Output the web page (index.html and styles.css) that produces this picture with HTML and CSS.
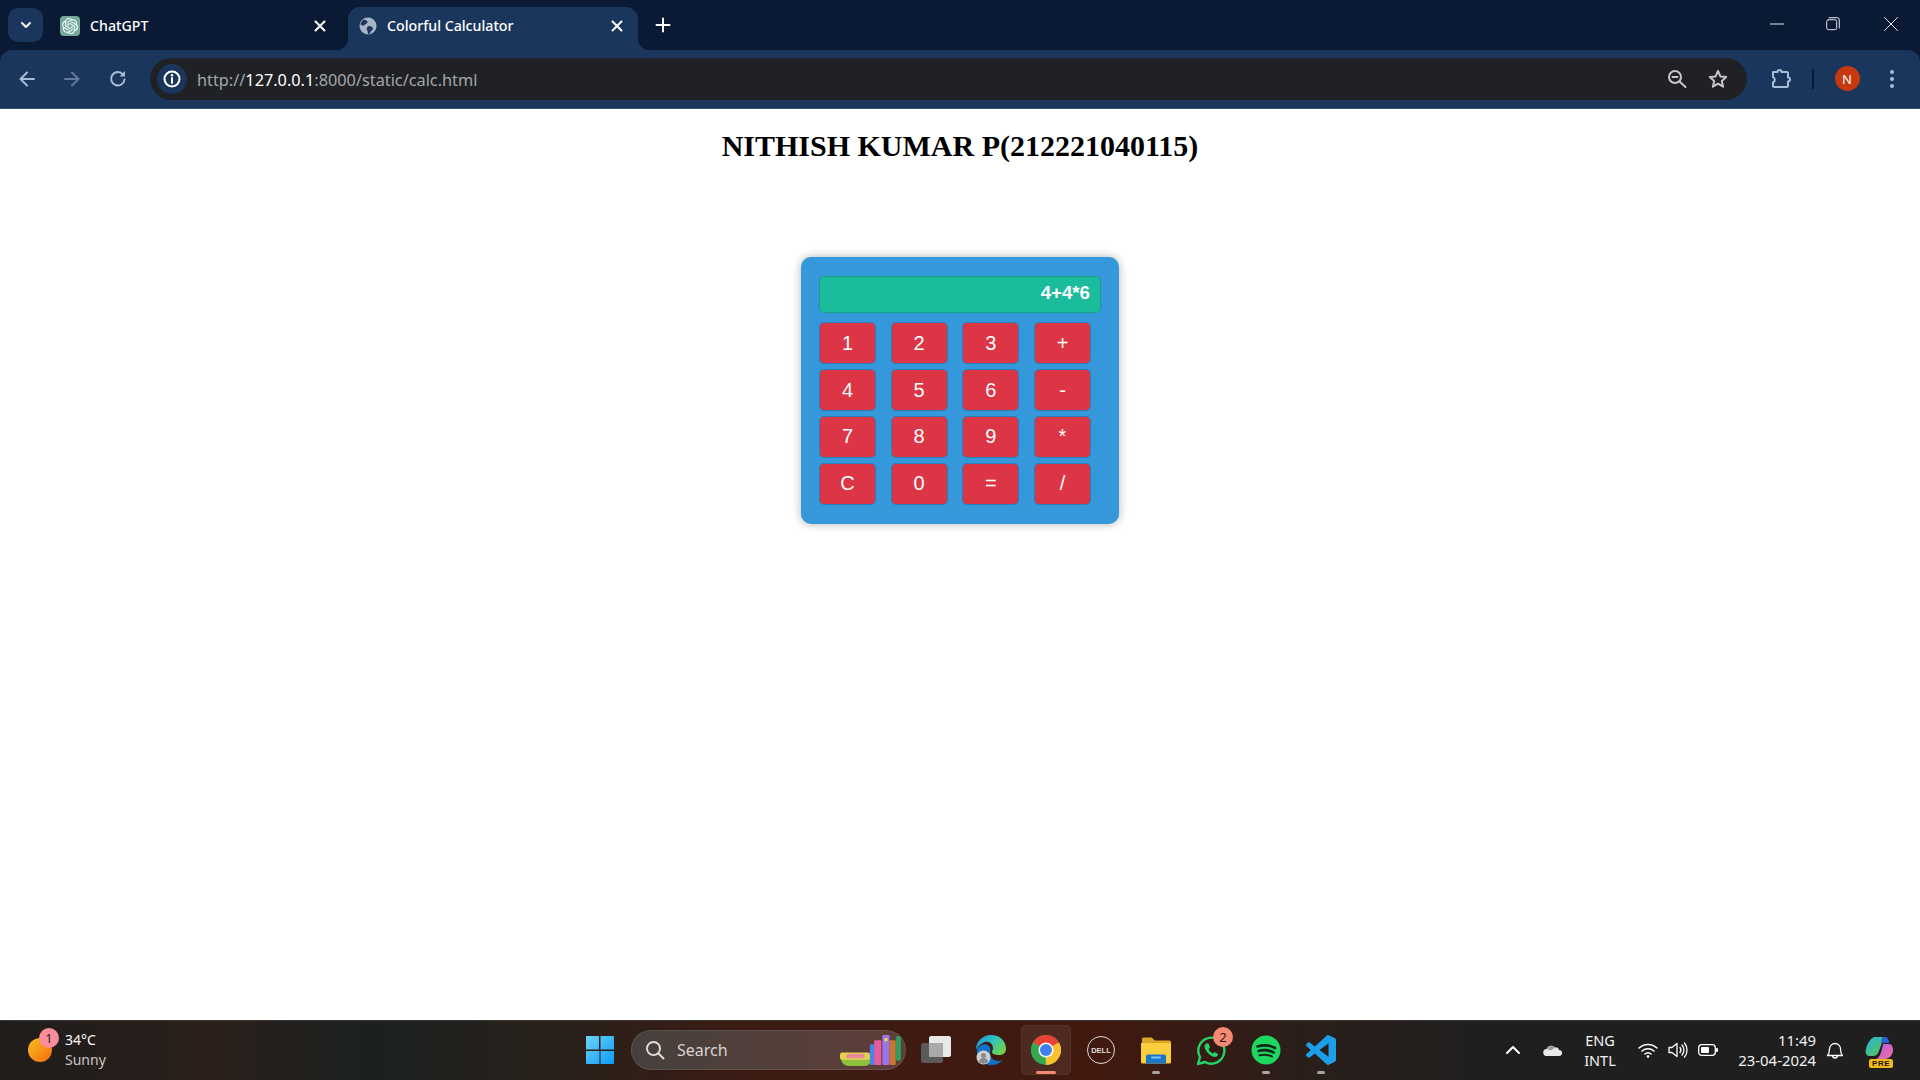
FILE: index.html
```html
<!DOCTYPE html>
<html lang="en">
<head>
<meta charset="utf-8">
<title>Colorful Calculator</title>
<link rel="stylesheet" href="styles.css">
</head>
<body>
<header class="browser">
  <div class="tabstrip">
    <button class="tabsearch"><svg class="i14" viewBox="0 0 14 14"><path d="M3 5l4 4 4-4" class="st2 white"/></svg></button>
    <div class="tab">
      <span class="favicon-gpt"><svg viewBox="0 0 24 24"><path fill="#fff" d="M22.2819 9.8211a5.9847 5.9847 0 0 0-.5157-4.9108 6.0462 6.0462 0 0 0-6.5098-2.9A6.0651 6.0651 0 0 0 4.9807 4.1818a5.9847 5.9847 0 0 0-3.9977 2.9 6.0462 6.0462 0 0 0 .7427 7.0966 5.98 5.98 0 0 0 .511 4.9107 6.051 6.051 0 0 0 6.5146 2.9001A5.9847 5.9847 0 0 0 13.2599 24a6.0557 6.0557 0 0 0 5.7718-4.2058 5.9894 5.9894 0 0 0 3.9977-2.9001 6.0557 6.0557 0 0 0-.7475-7.0729zm-9.022 12.6081a4.4755 4.4755 0 0 1-2.8764-1.0408l.1419-.0804 4.7783-2.7582a.7948.7948 0 0 0 .3927-.6813v-6.7369l2.02 1.1686a.071.071 0 0 1 .038.052v5.5826a4.504 4.504 0 0 1-4.4945 4.4944zm-9.6607-4.1254a4.4708 4.4708 0 0 1-.5346-3.0137l.142.0852 4.783 2.7582a.7712.7712 0 0 0 .7806 0l5.8428-3.3685v2.3324a.0804.0804 0 0 1-.0332.0615L9.74 19.9502a4.4992 4.4992 0 0 1-6.1408-1.6464zM2.3408 7.8956a4.485 4.485 0 0 1 2.3655-1.9728V11.6a.7664.7664 0 0 0 .3879.6765l5.8144 3.3543-2.0201 1.1685a.0757.0757 0 0 1-.071 0l-4.8303-2.7865A4.504 4.504 0 0 1 2.3408 7.872zm16.5963 3.8558L13.1038 8.364 15.1192 7.2a.0757.0757 0 0 1 .071 0l4.8303 2.7913a4.4944 4.4944 0 0 1-.6765 8.1042v-5.6772a.79.79 0 0 0-.407-.667zm2.0107-3.0231l-.142-.0852-4.7735-2.7818a.7759.7759 0 0 0-.7854 0L9.409 9.2297V6.8974a.0662.0662 0 0 1 .0284-.0615l4.8303-2.7866a4.4992 4.4992 0 0 1 6.6802 4.66zM8.3065 12.863l-2.02-1.1638a.0804.0804 0 0 1-.038-.0567V6.0742a4.4992 4.4992 0 0 1 7.3757-3.4537l-.142.0805L8.704 5.459a.7948.7948 0 0 0-.3927.6813zm1.0976-2.3654l2.602-1.4998 2.6069 1.4998v2.9994l-2.5974 1.4997-2.6067-1.4997Z"/></svg></span>
      <span class="tabtitle">ChatGPT</span>
      <svg class="tabclose" viewBox="0 0 16 16"><path d="M3.5 3.5l9 9M12.5 3.5l-9 9" class="st2 white"/></svg>
    </div>
    <div class="tab active">
      <svg class="favicon-globe" viewBox="0 0 18 18"><circle cx="9" cy="9" r="8.5" fill="#a9b5c6"/><path d="M5 2.5c2 .5 3.5 1 3.5 2.5S6.5 7 5.5 8 3 8.5 1.5 7.5C2 5.500 3 3.500 5 2.500zM10 9c2 0 4 1 4 2.500s-2 2-2.500 3.500-1.500 2-2.500 2c0-2-.5-3-1-4S8 9 10 9z" fill="#1b365d"/></svg>
      <span class="tabtitle">Colorful Calculator</span>
      <svg class="tabclose" viewBox="0 0 16 16"><path d="M3.5 3.5l9 9M12.5 3.5l-9 9" class="st2 white"/></svg>
    </div>
    <svg class="newtab" viewBox="0 0 16 16"><path d="M8 1.500v13M1.500 8h13" class="st2 white"/></svg>
    <div class="winctl">
      <span class="wbtn"><svg class="i14" viewBox="0 0 14 14"><path d="M.5 7h13" class="st1 light"/></svg></span>
      <span class="wbtn"><svg class="i14" viewBox="0 0 14 14"><rect x=".7" y="2.700" width="10" height="10" rx="2" class="st1 light"/><path d="M3 .7h8a2.300 2.300 0 0 1 2.300 2.300v8" class="st1 light"/></svg></span>
      <span class="wbtn wide"><svg class="i14" viewBox="0 0 14 14"><path d="M.5.5l13 13M13.500.5l-13 13" class="st1 light"/></svg></span>
    </div>
  </div>
  <div class="toolbar">
    <span class="tbtn"><svg class="i18" viewBox="0 0 18 18"><path d="M16 9H2.500M9 2.500L2.500 9 9 15.500" class="st2 ico"/></svg></span>
    <span class="tbtn forward"><svg class="i18" viewBox="0 0 18 18"><path d="M2 9h13.500M9 2.500L15.500 9 9 15.500" class="st2 dim"/></svg></span>
    <span class="tbtn reload"><svg class="i18" viewBox="0 0 18 18"><path d="M15.500 9.500A6.700 6.700 0 1 1 14 4.500" class="st2 ico"/><path d="M16 1v5.500h-5.500z" class="fill-ico"/></svg></span>
    <div class="omnibox">
      <span class="siteinfo"><svg class="i18" viewBox="0 0 18 18"><circle cx="9" cy="9" r="7.500" class="st2 white"/><path d="M9 8v5" class="st2 white"/><circle cx="9" cy="5.300" r="1.200" fill="#fff"/></svg></span>
      <span class="url">http://<b class="host">127.0.0.1</b>:8000/static/calc.html</span>
      <span class="obtn"><svg class="i20" viewBox="0 0 20 20"><circle cx="8" cy="8" r="6" class="st2 grey"/><path d="M5.500 8h5M12.500 12.500l6 5.500" class="st2 grey"/></svg></span>
      <span class="obtn star"><svg class="i20" viewBox="0 0 20 20"><path d="M10 2l2.400 5.400 5.800.6-4.400 3.900 1.300 5.800L10 14.700l-5.100 3 1.300-5.800L1.800 8l5.800-.6z" class="st2 grey"/></svg></span>
    </div>
    <div class="tools">
      <span class="tbtn ext"><svg class="i22" viewBox="0 0 22 22"><path d="M3 4h4.500a2 2 0 0 1 4 0H17a1 1 0 0 1 1 1v4.500a2 2 0 0 1 0 4V18a1 1 0 0 1-1 1H4a1 1 0 0 1-1-1v-3.500a3 3 0 0 0 0-5.500z" class="st2 ico"/></svg></span>
      <span class="tooldiv"></span>
      <span class="tbtn avatarwrap"><span class="avatar">N</span></span>
      <span class="tbtn dots"><i></i><i></i><i></i></span>
    </div>
  </div>
</header>

<main class="page">
  <h1 class="title">NITHISH KUMAR P(212221040115)</h1>
  <section class="calculator">
    <div class="display">4+4*6</div>
    <div class="keys">
      <button class="key">1</button><button class="key">2</button><button class="key">3</button><button class="key">+</button>
      <button class="key">4</button><button class="key">5</button><button class="key">6</button><button class="key">-</button>
      <button class="key">7</button><button class="key">8</button><button class="key">9</button><button class="key">*</button>
      <button class="key">C</button><button class="key">0</button><button class="key">=</button><button class="key">/</button>
    </div>
  </section>
</main>

<footer class="taskbar">
  <div class="weather">
    <span class="sun"><span class="sunbadge">1</span></span>
    <span class="wtext"><span class="temp">34°C</span><span class="cond">Sunny</span></span>
  </div>
  <div class="apps">
    <span class="app"><svg class="i30" viewBox="0 0 30 30"><defs><linearGradient id="w" x1="0" y1="0" x2="1" y2="1"><stop offset="0" stop-color="#6fd3fb"/><stop offset="1" stop-color="#0a9bf5"/></linearGradient></defs><path fill="url(#w)" d="M1 2a1 1 0 0 1 1-1h12v13.500H1zM15.500 1H28a1 1 0 0 1 1 1v12.500H15.500zM1 16h13.500v13H2a1 1 0 0 1-1-1zM15.500 16H29v12a1 1 0 0 1-1 1H15.500z"/></svg></span>
    <div class="searchbox">
      <svg class="i20" viewBox="0 0 20 20"><circle cx="8.500" cy="8.500" r="6.500" class="st2 pale"/><path d="M13.500 13.500l5 5" class="st2 pale"/></svg>
      <span class="searchlabel">Search</span>
      <svg class="books" viewBox="0 0 60 30"><path d="M1 22h29v2a6 6 0 0 1-6 6H8a8 8 0 0 1-7-6z" fill="#8fc13e"/><rect x="0" y="17" width="29" height="7" rx="2" fill="#e3d04f"/><rect x="6" y="18.500" width="18" height="4" rx="2" fill="#e78b98"/><rect x="29" y="9" width="4" height="20" rx="1" fill="#3f87e8"/><rect x="33" y="5" width="7" height="24" rx="1" fill="#e45da0"/><rect x="41" y="0" width="7" height="29" rx="1" fill="#9d75e8"/><rect x="43" y="3" width="3" height="3" fill="#f2d24b"/><rect x="48" y="5" width="6" height="24" rx="1" fill="#c9762f"/><rect x="54" y="1" width="5" height="24" rx="2" fill="#2f9e62"/></svg>
    </div>
    <span class="app"><svg class="i30" viewBox="0 0 30 30"><rect x="8" y="1" width="22" height="21" rx="2" fill="#e8e8e8"/><rect x="0" y="8" width="22" height="20" rx="2" fill="#5a5a5a"/><rect x="8" y="8" width="14" height="14" fill="#a9a9a9"/></svg></span>
    <span class="app"><svg class="i30" viewBox="0 0 30 30"><defs><linearGradient id="e1" x1="0" y1="0" x2="1" y2=".6"><stop offset="0" stop-color="#1f8fd8"/><stop offset=".55" stop-color="#2ec4c0"/><stop offset="1" stop-color="#6fd24a"/></linearGradient></defs><path fill="url(#e1)" d="M15 0c9 0 15 6 15 14 0 4-3 6-7 6s-7-1-7-3c0-1 1-2 1-4 0-4-4-7-8-6S1 12 0 15C0 7 6 0 15 0z"/><path fill="#1272c9" d="M1 14c3-5 9-6 12-3s0 7 2 11 8 5 12 3c-3 3-7 5-12 5C7 30 0 23 1 14z"/><circle cx="7.500" cy="22.500" r="7" fill="#cfcfcf"/><circle cx="7.500" cy="20.500" r="2.500" fill="#8a8a8a"/><path d="M3 27c0-3 2-4 4.500-4s4.500 1 4.500 4a7 7 0 0 1-9 0z" fill="#8a8a8a"/></svg></span>
    <span class="app current"><svg class="i30" viewBox="0 0 30 30"><circle cx="15" cy="15" r="15" fill="#34a853"/><path d="M15 0a15 15 0 0 1 13 7.500L15 15 2 7.500A15 15 0 0 1 15 0z" fill="#ea4335"/><path d="M28 7.500A15 15 0 0 1 15 30l-1-15z" fill="#fbc02d"/><path d="M2 7.500L15 15l-6.500 13.500A15 15 0 0 1 2 7.500z" fill="#34a853"/><circle cx="15" cy="15" r="7.500" fill="#fff"/><circle cx="15" cy="15" r="6" fill="#3f7ff0"/></svg></span>
    <span class="app"><span class="dell">DELL</span></span>
    <span class="app running"><svg class="i30" viewBox="0 0 30 30"><path d="M1 4a1.500 1.500 0 0 1 1.500-1.500h8L14 5.500h14.500A1.500 1.500 0 0 1 30 7v2H1z" fill="#e0a526"/><path d="M0 8h30v19a1.500 1.500 0 0 1-1.500 1.500h-27A1.500 1.500 0 0 1 0 27z" fill="#fbcd3f"/><path d="M5 21a1.500 1.500 0 0 1 1.500-1.500h17A1.500 1.500 0 0 1 25 21v7.500H5z" fill="#1a78c8"/><path d="M11 22.500h8" class="st2 sky"/></svg></span>
    <span class="app"><svg class="i30" viewBox="0 0 30 30"><path d="M2 29l2-7A13 13 0 1 1 9 27z" class="wa"/><path d="M10 8.500c-2 1.500-2 4 0 7s5 6 8.500 6.500c2 0 3.500-1 3.500-3l-3.500-2-1.500 1.500c-2-1-3.500-2.500-4.500-4.500l1.500-1.500-1.500-4z" fill="#25d366"/></svg><span class="appbadge">2</span></span>
    <span class="app running"><svg class="i30" viewBox="0 0 30 30"><circle cx="15" cy="15" r="14.500" fill="#1ed760"/><path d="M6.500 11.500c6-1.800 12.500-1.300 17.500 1.500M7.500 16c5-1.400 10.500-1 15 1.500" class="spot"/><path d="M8.500 20.300c4.500-1.100 9-.8 12.500 1.200" class="spot thin"/></svg></span>
    <span class="app running"><svg class="i30" viewBox="0 0 24 24"><path fill="#1c9ee8" d="M23.15 2.587L18.21.21a1.494 1.494 0 0 0-1.705.29l-9.46 8.63-4.12-3.128a.999.999 0 0 0-1.276.057L.327 7.261A1 1 0 0 0 .326 8.74L3.899 12 .326 15.26a1 1 0 0 0 .001 1.479L1.65 17.94a.999.999 0 0 0 1.276.057l4.12-3.128 9.46 8.63a1.492 1.492 0 0 0 1.704.29l4.942-2.377A1.5 1.5 0 0 0 24 20.06V3.939a1.5 1.5 0 0 0-.85-1.352zm-5.146 14.861L10.826 12l7.178-5.448v10.896z"/></svg></span>
  </div>
  <div class="tray">
    <span class="tcell"><svg class="i16" viewBox="0 0 16 16"><path d="M2 11l6-6 6 6" class="st2 white"/></svg></span>
    <span class="tcell"><svg class="cloud" viewBox="0 0 20 12"><path d="M4 12a3.500 3.500 0 0 1-.5-7A5 5 0 0 1 12 3.500 3 3 0 0 1 16 6a3 3 0 0 1 0 6z" fill="#e8e8e8"/><path d="M4 5a5 5 0 0 1 8-1.500L8 6.500z" fill="#9a9a9a"/></svg></span>
    <span class="lang"><span>ENG</span><span>INTL</span></span>
    <span class="tcell net"><svg class="i20" viewBox="0 0 20 20"><path d="M1 8a13 13 0 0 1 18 0M4 11a9 9 0 0 1 12 0M7 14a4.500 4.500 0 0 1 6 0" class="st15 white"/><circle cx="10" cy="16.500" r="1.300" fill="#fff"/></svg></span>
    <span class="tcell"><svg class="i20" viewBox="0 0 20 20"><path d="M1 7.500v5h3l5 4v-13l-5 4z" class="st13 white"/><path d="M12 7.500a4 4 0 0 1 0 5M14 5a7.500 7.500 0 0 1 0 10M16.500 3a11 11 0 0 1 0 14" class="st13 white"/></svg></span>
    <span class="tcell"><svg class="i20" viewBox="0 0 20 20"><rect x="0.700" y="4.700" width="16.600" height="10.600" rx="3" class="st13 white"/><rect x="3" y="7" width="8" height="6" rx="1" fill="#fff"/><rect x="18" y="8" width="2" height="4" rx="1" fill="#fff"/></svg></span>
    <span class="clock"><span>11:49</span><span>23-04-2024</span></span>
    <span class="tcell bell"><svg class="i20" viewBox="0 0 20 20"><path d="M2.500 15.500c1.500-1.500 2-3 2-6.500a5.500 5.500 0 0 1 11 0c0 3.500.5 5 2 6.500zM7.500 15.500a2.500 2.500 0 0 0 5 0" class="st13 white"/></svg></span>
    <span class="tcell copilot">
      <svg class="i30" viewBox="0 0 30 30"><defs><linearGradient id="c1" x1="0" y1="0" x2="1" y2="1"><stop offset="0" stop-color="#1fb6e8"/><stop offset="1" stop-color="#66c33f"/></linearGradient><linearGradient id="c2" x1="0" y1="0" x2="1" y2="1"><stop offset="0" stop-color="#b45ce8"/><stop offset="1" stop-color="#f0709a"/></linearGradient></defs><path d="M10 2h9l-5 14c-1 3-3 5-6 5H4c-3 0-4-4-3-7C2 9 6 2 10 2z" fill="url(#c1)"/><path d="M17 2h3c3 0 4 3 4 6h-8z" fill="#2a5fd8"/><path d="M18 9h6c3 0 4 3 4 6 0 5-4 9-8 9h-9c4-2 5-5 7-15z" fill="url(#c2)"/></svg>
      <span class="pre">PRE</span>
    </span>
  </div>
</footer>
</body>
</html>
```

FILE: styles.css
```css
* { box-sizing: border-box; }
html, body { height: 100%; }
body {
  margin: 0;
  display: flex;
  flex-direction: column;
  height: 1080px;
  overflow: hidden;
  background: #fff;
  font-family: "Noto Sans", "Open Sans", sans-serif;
}
svg { display: block; flex: none; }
.i14 { width: 14px; height: 14px; }
.i16 { width: 16px; height: 16px; }
.i18 { width: 18px; height: 18px; }
.i20 { width: 20px; height: 20px; }
.i22 { width: 22px; height: 22px; }
.i30 { width: 30px; height: 30px; }
.st1, .st2, .st13, .st15, .spot, .wa { fill: none; stroke-linecap: round; stroke-linejoin: round; }
.st1 { stroke-width: 1; }
.st2 { stroke-width: 2; }
.st13 { stroke-width: 1.3; }
.st15 { stroke-width: 1.5; }
.white { stroke: #fff; }
.light { stroke: #e4e8ef; }
.ico { stroke: #a9bcd8; }
.dim { stroke: #64799a; }
.grey { stroke: #c7c7c7; }
.pale { stroke: #e0dcd8; }
.sky { stroke: #7cc4f2; }
.fill-ico { fill: #a9bcd8; }

/* browser chrome */
.browser { flex: none; background: #0a1a35; }
.tabstrip { display: flex; align-items: flex-end; height: 50px; padding-left: 8px; }
.tabsearch {
  align-self: flex-start;
  margin-top: 8px;
  width: 35px; height: 34px;
  display: flex; align-items: center; justify-content: center;
  padding: 0; border: 0; border-radius: 10px;
  background: #1b365d;
}
.tab {
  display: flex; align-items: center;
  height: 43px; width: 300px;
  margin-left: 4px;
  padding: 0 19px 6px 13px;
  color: #fff;
  font-size: 14.2px; font-weight: 500;
}
.tab.active {
  position: relative;
  width: 290px; margin-left: 1px;
  padding: 0 13px 6px 11px;
  background: #1b365d;
  border-radius: 12px 12px 0 0;
}
.tab.active::before, .tab.active::after {
  content: ""; position: absolute; bottom: 0; width: 12px; height: 12px;
}
.tab.active::before { left: -12px; background: radial-gradient(circle at 0 0, transparent 12px, #1b365d 12.5px); }
.tab.active::after { right: -12px; background: radial-gradient(circle at 100% 0, transparent 12px, #1b365d 12.5px); }
.favicon-gpt {
  width: 20px; height: 20px; flex: none;
  padding: 2px; border-radius: 4px;
  background: #74aa9c;
}
.favicon-gpt svg { width: 16px; height: 16px; }
.favicon-globe { width: 18px; height: 18px; }
.tabtitle { flex: 1; margin-left: 10px; white-space: nowrap; }
.tabclose { width: 16px; height: 16px; }
.newtab { width: 16px; height: 16px; margin: 0 0 17px 17px; align-self: flex-end; }
.winctl { margin-left: auto; align-self: stretch; display: flex; }
.wbtn { width: 56px; display: flex; align-items: center; justify-content: center; padding-bottom: 2px; }
.wbtn.wide { width: 59px; }

.toolbar {
  display: flex; align-items: center;
  height: 59px;
  padding: 0 0 1px 9px;
  background: #1b365d;
  border-bottom: 1px solid #34507a;
  border-radius: 12px 12px 0 0;
}
.tbtn { width: 36px; height: 36px; flex: none; display: flex; align-items: center; justify-content: center; }
.forward { margin-left: 9px; }
.reload { margin-left: 10px; margin-right: 14px; }
.omnibox {
  flex: 1;
  height: 42px;
  display: flex; align-items: center;
  padding: 0 11px 0 7px;
  border-radius: 21px;
  background: #202124;
}
.siteinfo {
  width: 30px; height: 30px; flex: none;
  display: flex; align-items: center; justify-content: center;
  border-radius: 50%;
  background: #1b365d;
}
.url { flex: 1; margin-left: 10px; padding-top: 2px; color: #a3a6ab; font-size: 16.3px; white-space: nowrap; }
.host { color: #fff; font-weight: 400; }
.obtn { width: 36px; height: 36px; flex: none; display: flex; align-items: center; justify-content: center; }
.obtn + .obtn { margin-left: 5px; }
.tools { display: flex; align-items: center; width: 173px; padding-left: 16px; flex: none; }
.tooldiv { width: 2px; height: 20px; margin: 0 15px 0 13px; background: #0a1a35; }
.avatar {
  width: 25px; height: 25px;
  display: flex; align-items: center; justify-content: center;
  border-radius: 50%;
  background: #c8380f;
  color: #fff; font-size: 13px;
}
.dots { flex-direction: column; gap: 3px; margin-left: 9px; }
.dots i { width: 4px; height: 4px; border-radius: 50%; background: #a9bcd8; }

/* page */
.page { flex: 1; min-height: 0; background: #fff; }
.title {
  margin: 18px 0 0;
  text-align: center;
  font: bold 30px/37px "Liberation Serif", "Times New Roman", serif;
  color: #000;
}
.calculator {
  width: 318px;
  margin: 93px auto 0;
  padding: 19px 18px 19.6px;
  border-radius: 10px;
  background: #3498db;
  box-shadow: 0 0 10px rgba(0, 0, 0, .3);
  font-family: "Liberation Sans", Arial, sans-serif;
}
.display {
  height: 37px;
  margin-bottom: 9.4px;
  padding-right: 10px;
  border: 1px solid #16a085;
  border-radius: 5px;
  background: #1abc9c;
  color: #fff;
  font-size: 18.7px; font-weight: bold;
  line-height: 32px;
  text-align: right;
}
.keys {
  display: grid;
  grid-template-columns: repeat(4, 57px);
  grid-auto-rows: 41.5px;
  column-gap: 14.67px;
  row-gap: 5.4px;
}
.key {
  padding: 0;
  border: 1px solid #2980b9;
  border-radius: 5px;
  background: #dc3545;
  color: #fff;
  font: 20px "Liberation Sans", Arial, sans-serif;
}

/* taskbar */
.taskbar {
  flex: none;
  height: 60px;
  display: grid;
  grid-template-columns: 575px auto 1fr;
  padding-bottom: 1px;
  border-top: 1px solid #3b3836;
  background: linear-gradient(90deg, #1f1d1b 0, #2a1f1b 210px, #1b2120 370px, #2a201a 570px, #3c1b13 760px, #41190f 1100px, #2a1e1a 1300px, #1f1f1f 1480px, #1f1f1f 100%);
  color: #fff;
}
.weather { display: flex; align-items: center; padding-left: 28px; }
.sun {
  position: relative;
  width: 24px; height: 24px;
  border-radius: 50%;
  background: linear-gradient(135deg, #f3c020, #f96a0c);
}
.sunbadge {
  position: absolute; left: 11px; top: -10px;
  width: 20px; height: 20px;
  display: flex; align-items: center; justify-content: center;
  border-radius: 50%;
  background: #fb8c9a;
  color: #2a1a1a; font-size: 12px;
}
.wtext { display: flex; flex-direction: column; margin-left: 13px; font-size: 14px; line-height: 20px; }
.cond { color: #c8c6c4; }
.apps { display: flex; align-items: center; gap: 5px; }
.app {
  position: relative;
  width: 50px; height: 50px;
  display: flex; align-items: center; justify-content: center;
  border-radius: 5px;
}
.app.current { background: rgba(255, 255, 255, .07); box-shadow: inset 0 0 0 1px rgba(255, 255, 255, .05); }
.app.current::after, .app.running::after {
  content: ""; position: absolute; bottom: 1px; left: 50%;
  width: 8px; height: 3px; margin-left: -4px;
  border-radius: 2px; background: #a8a4a2;
}
.app.current::after { width: 20px; margin-left: -10px; background: #f58a72; }
.searchbox {
  display: flex; align-items: center;
  width: 275px; height: 40px;
  margin-left: 1px;
  padding-left: 13px;
  border: 1px solid rgba(255, 255, 255, .09);
  border-radius: 20px;
  background: linear-gradient(90deg, #46403c, #5f3e39);
}
.searchlabel { flex: 1; margin-left: 12px; color: #d8d4d0; font-size: 16px; }
.books { width: 62px; height: 31px; margin-right: 3px; }
.dell {
  width: 28px; height: 28px;
  display: flex; align-items: center; justify-content: center;
  border: 1.5px solid #ddd; border-radius: 50%;
  color: #ddd;
  font: bold 7.5px "Liberation Sans", Arial, sans-serif;
}
.wa { stroke: #25d366; stroke-width: 2.4; }
.appbadge {
  position: absolute; right: 3px; top: 2px;
  width: 20px; height: 20px;
  display: flex; align-items: center; justify-content: center;
  border-radius: 50%;
  background: #f58a72;
  color: #2a1612; font-size: 13px;
}
.spot { stroke: #16251a; stroke-width: 2.6; }
.spot.thin { stroke-width: 2; }
.tray { display: flex; align-items: center; justify-content: flex-end; padding-right: 14px; }
.tcell { width: 40px; height: 40px; display: flex; align-items: center; justify-content: center; }
.cloud { width: 20px; height: 12px; }
.lang, .clock { display: flex; flex-direction: column; line-height: 20px; color: #f2f2f2; }
.lang { width: 54px; align-items: center; font-size: 14.5px; }
.net { margin-left: 6px; }
.net, .net + .tcell, .net + .tcell + .tcell { width: 30px; }
.clock { width: 93px; align-items: flex-end; font-size: 14.9px; }
.bell { width: 38px; }
.copilot { position: relative; width: 52px; }
.pre {
  position: absolute; left: 15px; bottom: 2px;
  padding: 0 3px;
  border-radius: 2px;
  background: #f2b817;
  color: #1f1a10;
  font: bold 8px/9px "Liberation Sans", Arial, sans-serif;
  letter-spacing: .6px;
}
```
